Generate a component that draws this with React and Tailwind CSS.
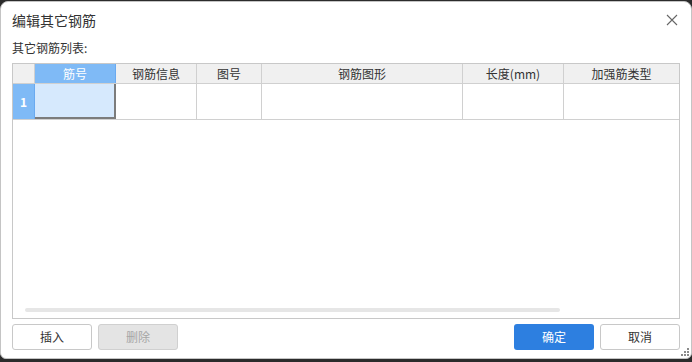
import React from 'react';

const cjk = { fontFamily: '"Noto Sans CJK SC", "Liberation Sans", sans-serif' };

const columns = [
  { key: 'no', title: '筋号', w: 'w-[81px]' },
  { key: 'info', title: '钢筋信息', w: 'w-[81px]' },
  { key: 'fig', title: '图号', w: 'w-[65px]' },
  { key: 'shape', title: '钢筋图形', w: 'w-[201px]' },
  { key: 'len', title: '长度(mm)', w: 'w-[101px]' },
  { key: 'type', title: '加强筋类型', w: 'flex-1' },
];

function CloseIcon() {
  return (
    <svg width="12" height="12" viewBox="0 0 12 12" className="text-[#666]">
      <path d="M1 1 L11 11 M11 1 L1 11" stroke="currentColor" strokeWidth="1.1" fill="none" />
    </svg>
  );
}

function Grip() {
  const dots = [[6, 0], [3, 3], [6, 3], [0, 6], [3, 6], [6, 6]];
  return (
    <svg width="8" height="8" viewBox="0 0 8 8" className="absolute right-[2px] bottom-[2px]">
      {dots.map(([x, y], i) => (
        <rect key={i} x={x} y={y} width="2" height="2" fill="#8a8a8a" />
      ))}
    </svg>
  );
}

export default function App() {
  return (
    <div className="w-[692px] h-[362px] bg-[#2b2b2b] pt-[1px] text-[#333]" style={cjk}>
      <div className="relative h-[358px] bg-white border border-[#c4c4c4] rounded-t-[8px] rounded-b-[6px] flex flex-col px-[11px]">
        {/* title bar */}
        <div className="h-[36px] flex items-center justify-between">
          <span className="text-[14px] text-[#333]">编辑其它钢筋</span>
          <span className="mr-[2px] flex items-center"><CloseIcon /></span>
        </div>

        <div className="h-[20px] flex items-center text-[12px] text-[#333]">其它钢筋列表:</div>

        {/* grid */}
        <div className="mt-[5px] h-[256px] border border-[#c8c8c8] flex flex-col relative">
          <div className="flex h-[20px] border-b border-[#d0d0d0] bg-[#f0f0f0] text-[12px]">
            <div className="w-[22px] border-r border-[#d0d0d0]" />
            {columns.map((c, i) => (
              <div
                key={c.key}
                className={
                  i === 0
                    ? `${c.w} bg-[#7fbaf6] text-white border-r border-[#6aaaf0] flex items-center justify-center`
                    : `${c.w} ${i < columns.length - 1 ? 'border-r border-[#d0d0d0]' : ''} flex items-center justify-center`
                }
              >
                {c.title}
              </div>
            ))}
          </div>
          <div className="flex h-[36px] border-b border-[#d0d0d0] text-[12px]">
            <div className="w-[22px] bg-[#7fbaf6] text-white font-bold flex items-center justify-center border-r border-[#6aaaf0]">1</div>
            {columns.map((c, i) =>
              i === 0 ? (
                <div key={c.key} className={`${c.w} bg-[#d6e9fd] border-r-2 border-b-2 border-[#7c7c7c]`} />
              ) : (
                <div key={c.key} className={`${c.w} ${i < columns.length - 1 ? 'border-r border-[#d0d0d0]' : ''}`} />
              )
            )}
          </div>
          <div className="flex-1 relative">
            <div className="absolute left-[12px] bottom-[6px] w-[535px] h-[4px] rounded-full bg-[#e6e6e6]" />
          </div>
        </div>

        {/* buttons */}
        <div className="mt-[5px] flex items-center justify-between text-[12px]">
          <div className="flex gap-[6px]">
            <button className="w-[80px] h-[26px] rounded-[3px] border border-[#c8c8c8] bg-white text-[#333]">插入</button>
            <button className="w-[80px] h-[26px] rounded-[3px] border border-[#d0d0d0] bg-[#e4e4e4] text-[#a6a6a6]">删除</button>
          </div>
          <div className="flex gap-[6px]">
            <button className="w-[80px] h-[26px] rounded-[3px] bg-[#2d7fe0] text-white">确定</button>
            <button className="w-[80px] h-[26px] rounded-[3px] border border-[#c8c8c8] bg-white text-[#333]">取消</button>
          </div>
        </div>
        <Grip />
      </div>
    </div>
  );
}
